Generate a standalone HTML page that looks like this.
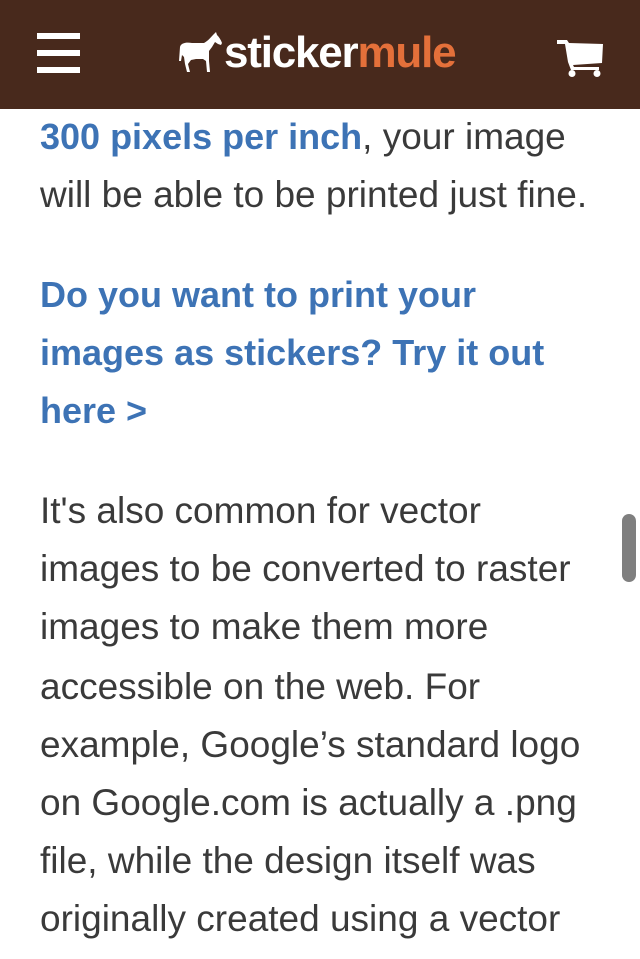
<!DOCTYPE html>
<html><head><meta charset="utf-8"><style>
html,body{margin:0;padding:0;width:640px;height:959px;overflow:hidden;background:#fff;}
.hdr{position:absolute;left:0;top:0;width:640px;height:109px;background:#48291c;}
.bar{position:absolute;left:37px;width:43px;height:6px;background:#fff;}
.logo{position:absolute;left:224px;top:27px;font:bold 44px/52px "Liberation Sans",sans-serif;color:#fff;letter-spacing:-1.2px;}
.logo span{color:#e4703a;}
.t{position:absolute;left:40px;font:37px/40px "Liberation Sans",sans-serif;color:#3a3a3a;white-space:nowrap;}
.b{color:#3d73b5;font-weight:bold;font-size:36px;}
.sb{position:absolute;left:622px;top:514px;width:14px;height:68px;border-radius:7px;background:#7f7f7f;}
</style></head><body>
<div class="hdr">
<div class="bar" style="top:33px"></div>
<div class="bar" style="top:50px"></div>
<div class="bar" style="top:67px"></div>
<svg style="position:absolute;left:178px;top:31px" width="46" height="44" viewBox="0 0 46 44">
<path fill="#fff" d="M2 16 C3 12 8 11 14 12 L26 12 C30 10 33 6 36 3 L38 1 L39 4 C41 6 43 9 44 12 L43 14 L40 13 L37 11 L34 16 L31 20 L31 30 L32 41 L29 41 L28 30 L25 28 L18 28 L13 29 L10 33 L12 41 L9 41 L7 33 L6 26 L4 24 L3 30 L1 30 Z"/>
</svg>
<div class="logo">sticker<span>mule</span></div>
<svg style="position:absolute;left:556px;top:39px" width="48" height="39" viewBox="0 0 48 39">
<path fill="#fff" d="M1 1 H11 L13 4 L47 5 L46 24 L17 26 L18 28 L43 28 L43 31 L15 31 L12 23 L9 5 H1 Z"/>
<circle cx="16" cy="34.5" r="3.5" fill="#fff"/><circle cx="41" cy="34.5" r="3.5" fill="#fff"/>
</svg>
</div>
<div class="t" style="top:117px"><span class="b">300 pixels per inch</span>, your image</div>
<div class="t" style="top:175px">will be able to be printed just fine.</div>
<div class="t b" style="top:275px">Do you want to print your</div>
<div class="t b" style="top:333px">images as stickers? Try it out</div>
<div class="t b" style="top:391px">here &gt;</div>
<div class="t" style="top:491px">It's also common for vector</div>
<div class="t" style="top:549px">images to be converted to raster</div>
<div class="t" style="top:607px">images to make them more</div>
<div class="t" style="top:667px">accessible on the web. For</div>
<div class="t" style="top:725px">example, Google’s standard logo</div>
<div class="t" style="top:783px">on Google.com is actually a .png</div>
<div class="t" style="top:841px">file, while the design itself was</div>
<div class="t" style="top:899px">originally created using a vector</div>
<div class="sb"></div>
</body></html>
